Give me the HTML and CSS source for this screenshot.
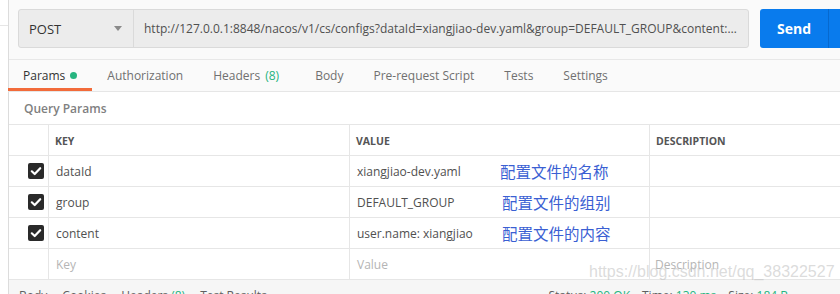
FILE: index.html
```html
<!DOCTYPE html>
<html lang="zh">
<head>
    <meta charset="UTF-8">
    <title>Postman - POST configs</title>
    <link rel="stylesheet" href="styles.css">
</head>
<body>
    <div class="sidebar"></div>
    <div class="main">
        <div class="url-row">
            <div class="url-bar">
                <div class="method">POST<span class="caret"></span></div>
                <div class="url">http://127.0.0.1:8848/nacos/v1/cs/configs?dataId=xiangjiao-dev.yaml&amp;group=DEFAULT_GROUP&amp;content:user.name:xiangjiao</div>
            </div>
            <div class="send-group">
                <button class="send">Send</button>
                <span class="send-more"></span>
            </div>
        </div>

        <div class="tabs">
            <div class="tab active">Params <span class="dot"></span></div>
            <div class="tab">Authorization</div>
            <div class="tab wide">Headers <span class="count">(8)</span></div>
            <div class="tab">Body</div>
            <div class="tab">Pre-request Script</div>
            <div class="tab">Tests</div>
            <div class="tab">Settings</div>
        </div>

        <div class="params">
            <div class="section-title">Query Params</div>
            <div class="table">
                <div class="row head">
                    <div class="cell check"></div>
                    <div class="cell">KEY</div>
                    <div class="cell">VALUE</div>
                    <div class="cell">DESCRIPTION</div>
                </div>
                <div class="row">
                    <div class="cell check"><span class="box"><svg viewBox="0 0 16 16" width="16" height="16"><path d="M3.8 8.3 6.7 11 12.2 5.2" fill="none" stroke="#fff" stroke-width="2.2" stroke-linecap="round" stroke-linejoin="round"/></svg></span></div>
                    <div class="cell">dataId</div>
                    <div class="cell value"><span>xiangjiao-dev.yaml</span><span class="note">配置文件的名称</span></div>
                    <div class="cell"></div>
                </div>
                <div class="row">
                    <div class="cell check"><span class="box"><svg viewBox="0 0 16 16" width="16" height="16"><path d="M3.8 8.3 6.7 11 12.2 5.2" fill="none" stroke="#fff" stroke-width="2.2" stroke-linecap="round" stroke-linejoin="round"/></svg></span></div>
                    <div class="cell">group</div>
                    <div class="cell value"><span>DEFAULT_GROUP</span><span class="note shift">配置文件的组别</span></div>
                    <div class="cell"></div>
                </div>
                <div class="row">
                    <div class="cell check"><span class="box"><svg viewBox="0 0 16 16" width="16" height="16"><path d="M3.8 8.3 6.7 11 12.2 5.2" fill="none" stroke="#fff" stroke-width="2.2" stroke-linecap="round" stroke-linejoin="round"/></svg></span></div>
                    <div class="cell">content</div>
                    <div class="cell value"><span>user.name: xiangjiao</span><span class="note shift">配置文件的内容</span></div>
                    <div class="cell"></div>
                </div>
                <div class="row empty">
                    <div class="cell check"></div>
                    <div class="cell">Key</div>
                    <div class="cell">Value</div>
                    <div class="cell">Description</div>
                </div>
            </div>
        </div>

        <div class="response">
            <div class="resp-tabs">
                <span>Body</span>
                <span>Cookies</span>
                <span>Headers <em>(8)</em></span>
                <span>Test Results</span>
            </div>
            <div class="resp-meta">
                <span>Status: <em>200 OK</em></span>
                <span>Time: <em>130 ms</em></span>
                <span>Size: <em>184 B</em></span>
            </div>
        </div>

        <div class="watermark">https://blog.csdn.net/qq_38322527</div>
    </div>
</body>
</html>
```

FILE: styles.css
```css
body {
    margin: 0;
    display: flex;
    height: 294px;
    overflow: hidden;
    font-family: "Open Sans", "Noto Sans", sans-serif;
    font-size: 12px;
    color: #505050;
    background-color: #fafafa;
}
.sidebar {
    width: 9px;
    box-sizing: border-box;
    border-right: 1px solid #dcdcdc;
    background: linear-gradient(#fff 25px, #e6e6e6 25px, #e6e6e6 26px, #fff 26px);
    flex-shrink: 0;
}
.main {
    flex: 1;
    min-width: 0;
    position: relative;
    display: flex;
    flex-direction: column;
}
.main > div {
    flex-shrink: 0;
}
.url-row {
    display: flex;
    gap: 11px;
    padding: 9px 0 11px 9px;
    border-bottom: 1px solid #e8e8e8;
}
.url-bar {
    flex: 1;
    min-width: 0;
    height: 39px;
    box-sizing: border-box;
    display: flex;
    background-color: #ececec;
    border: 1px solid #dadada;
    border-radius: 3px;
}
.method {
    width: 115px;
    flex-shrink: 0;
    box-sizing: border-box;
    display: flex;
    align-items: center;
    justify-content: space-between;
    padding: 0 11px 0 10px;
    border-right: 1px solid #dadada;
    font-size: 13px;
    color: #333;
}
.caret {
    width: 0;
    height: 0;
    border-left: 4px solid transparent;
    border-right: 4px solid transparent;
    border-top: 5px solid #8a8a8a;
}
.url {
    flex: 1;
    min-width: 0;
    padding: 0 10px;
    white-space: nowrap;
    overflow: hidden;
    text-overflow: ellipsis;
    line-height: 37px;
}
.send-group {
    display: flex;
    width: 110px;
    flex-shrink: 0;
    margin-right: -30px;
    height: 39px;
    border-radius: 3px;
    overflow: hidden;
    background-color: #097bed;
}
.send {
    width: 69px;
    border: none;
    background: transparent;
    color: #fff;
    font-family: "Open Sans", sans-serif;
    font-weight: 700;
    font-size: 14px;
    padding: 0;
    border-right: 1px solid #0669cf;
}
.send-more {
    flex: 1;
}
.tabs {
    display: flex;
    height: 32px;
    box-sizing: border-box;
    margin-left: -1px;
    border-bottom: 1px solid #e6e6e6;
}
.tab {
    padding: 3px 15px 0;
    display: flex;
    align-items: center;
    gap: 5px;
    font-size: 12px;
    color: #707070;
    border-bottom: 3px solid transparent;
}
.tab.active {
    color: #333;
    border-bottom-color: #f26b3a;
}
.tab.wide {
    margin-right: 6px;
}
.dot {
    width: 7px;
    height: 7px;
    border-radius: 50%;
    background-color: #26b47f;
}
.count {
    color: #26b47f;
}
.params {
    background-color: #fff;
}
.section-title {
    height: 32px;
    display: flex;
    align-items: center;
    padding-left: 15px;
    font-weight: 600;
    color: #808080;
}
.table {
    border-top: 1px solid #e6e6e6;
}
.row {
    display: grid;
    grid-template-columns: 39px 301px 300px 1fr;
    height: 31px;
    box-sizing: border-box;
    border-bottom: 1px solid #e6e6e6;
}
.cell {
    display: flex;
    align-items: center;
    padding-left: 7px;
    border-left: 1px solid #e6e6e6;
    white-space: nowrap;
}
.cell.check {
    border-left: none;
    justify-content: flex-end;
    padding: 0 4px 0 0;
}
.head .cell {
    font-size: 10.5px;
    font-weight: 700;
    color: #555;
    padding: 2px 0 0 6px;
}
.empty .cell {
    color: #b5b5b5;
}
.empty .cell:last-child {
    padding-left: 5px;
}
.box {
    width: 16px;
    height: 16px;
    border-radius: 2px;
    background-color: #2a2a2a;
    display: flex;
}
.value {
    display: grid;
    grid-template-columns: 143px auto;
    justify-content: start;
}
.note {
    font-family: "Noto Sans CJK SC", sans-serif;
    font-size: 15.5px;
    color: #3b5fd3;
}
.note.shift {
    margin-left: 2px;
}
.response {
    flex: 1;
    display: flex;
    justify-content: space-between;
    padding: 7px 10px 0 10px;
    background-color: #f6f6f6;
    color: #606060;
    white-space: nowrap;
    overflow: hidden;
}
.resp-tabs, .resp-meta {
    display: flex;
    gap: 15px;
}
.resp-meta {
    margin-right: 42px;
    gap: 12px;
}
.response em {
    font-style: normal;
    color: #26b47f;
}
.watermark {
    position: absolute;
    left: 580px;
    top: 263px;
    font-family: "Liberation Sans", Arial, sans-serif;
    font-size: 16px;
    color: rgba(190, 190, 190, 0.55);
}
```
